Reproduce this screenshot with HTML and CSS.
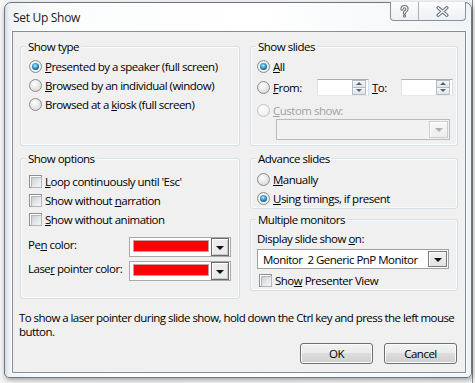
FILE: index.html
```html
<!DOCTYPE html>
<html>
<head>
<meta charset="utf-8">
<title>Set Up Show</title>
<link rel="stylesheet" href="styles.css">
</head>
<body>
<div class="window">
  <div class="titlebar">
    <span class="title">Set Up Show</span>
    <div class="caption-btns">
      <span class="cbtn help">
        <svg width="9" height="13" viewBox="0 0 9 13">
          <path d="M2 4.2 Q2 1.6 4.5 1.6 Q7 1.6 7 4 Q7 5.4 5.6 6.2 Q4.5 6.9 4.5 8.3" fill="none" stroke="#66707b" stroke-width="3.2" stroke-linecap="round"/>
          <path d="M2 4.2 Q2 1.6 4.5 1.6 Q7 1.6 7 4 Q7 5.4 5.6 6.2 Q4.5 6.9 4.5 8.3" fill="none" stroke="#fff" stroke-width="1.1" stroke-linecap="round"/>
          <circle cx="4.5" cy="11" r="1.6" fill="#66707b"/>
          <circle cx="4.5" cy="11" r="0.6" fill="#fff"/>
        </svg>
      </span>
      <span class="cbtn close">
        <svg width="13" height="11" viewBox="0 0 13 11">
          <path d="M2.2 1.8 L10.8 9.2 M10.8 1.8 L2.2 9.2" fill="none" stroke="#66707b" stroke-width="3.4" stroke-linecap="round"/>
          <path d="M2.2 1.8 L10.8 9.2 M10.8 1.8 L2.2 9.2" fill="none" stroke="#fff" stroke-width="1.3" stroke-linecap="round"/>
        </svg>
      </span>
    </div>
  </div>

  <div class="client">
    <div class="groups">
      <div class="group g-type">
        <span class="group-title">Show type</span>
        <div class="opt"><span class="radio on"></span><span><u>P</u>resented by a speaker (full screen)</span></div>
        <div class="opt"><span class="radio"></span><span><u>B</u>rowsed by an individual (window)</span></div>
        <div class="opt"><span class="radio"></span><span>Browsed at a <u>k</u>iosk (full screen)</span></div>
      </div>

      <div class="group g-slides">
        <span class="group-title">Show slides</span>
        <div class="opt"><span class="radio on"></span><span><u>A</u>ll</span></div>
        <div class="opt opt-range">
          <span class="radio"></span>
          <span class="range-label"><u>F</u>rom:</span>
          <span class="spin"><span class="spin-btns"><span class="spin-up"></span><span class="spin-down"></span></span></span>
          <span class="to-label"><u>T</u>o:</span>
          <span class="spin"><span class="spin-btns"><span class="spin-up"></span><span class="spin-down"></span></span></span>
        </div>
        <div class="opt opt-custom disabled"><span class="radio"></span><span><u>C</u>ustom show:</span></div>
        <div class="combo combo-disabled"><span class="combo-text"></span><span class="combo-btn"></span></div>
      </div>

      <div class="group g-options">
        <span class="group-title">Show options</span>
        <div class="opt"><span class="check"></span><span><u>L</u>oop continuously until 'Esc'</span></div>
        <div class="opt"><span class="check"></span><span>Show without <u>n</u>arration</span></div>
        <div class="opt"><span class="check"></span><span><u>S</u>how without animation</span></div>
        <div class="color-row first">
          <span class="color-label">Pe<u>n</u> color:</span>
          <span class="picker"><span class="swatch"></span><span class="picker-btn"></span></span>
        </div>
        <div class="color-row">
          <span class="color-label">Lase<u>r</u> pointer color:</span>
          <span class="picker"><span class="swatch"></span><span class="picker-btn"></span></span>
        </div>
      </div>

      <div class="right-stack">
        <div class="group g-advance">
          <span class="group-title">Advance slides</span>
          <div class="opt"><span class="radio"></span><span><u>M</u>anually</span></div>
          <div class="opt"><span class="radio on"></span><span><u>U</u>sing timings, if present</span></div>
        </div>
        <div class="group g-monitors">
          <span class="group-title">Multiple monitors</span>
          <div class="mon-label">Display slide show <u>o</u>n:</div>
          <div class="combo combo-mon"><span class="combo-text">Monitor&nbsp; 2 Generic PnP Monitor</span><span class="combo-btn"></span></div>
          <div class="opt opt-presenter"><span class="check"></span><span>Sho<u>w</u> Presenter View</span></div>
        </div>
      </div>
    </div>

    <p class="hint">To show a laser pointer during slide show, hold down the Ctrl key and press the left mouse<br>button.</p>

    <div class="actions">
      <button class="btn">OK</button>
      <button class="btn">Cancel</button>
    </div>
  </div>
</div>
</body>
</html>
```

FILE: styles.css
```css
* { box-sizing: border-box; }

html, body {
  margin: 0;
  padding: 0;
}

body {
  width: 475px;
  height: 383px;
  overflow: hidden;
  background:
    linear-gradient(90deg, transparent 472px, #8a8a8a 472px, #8a8a8a 473px, transparent 473px),
    #f4f4f4;
  font-family: "Open Sans", "Noto Sans", sans-serif;
  font-size: 11.5px;
  letter-spacing: -0.5px;
  color: #000;
  padding: 2px 0 0 4px;
}

.window {
  width: 468px;
  height: 376px;
  border: 1px solid #6f7882;
  border-radius: 7px 7px 5px 5px;
  background: linear-gradient(90deg, #d3dbe4 0, #eef2f6 4px, #fbfcfd 40px, #ffffff 55%, #f1f4f7 100%);
  box-shadow: 1px 2px 5px rgba(0, 0, 0, 0.35);
  display: flex;
  flex-direction: column;
}

/* Title bar */
.titlebar {
  height: 28px;
  flex: none;
  display: flex;
  justify-content: space-between;
  align-items: flex-start;
  padding: 0 5px 0 8px;
}

.title {
  line-height: 15px;
  margin-top: 7px;
  font-size: 12px;
  letter-spacing: -0.3px;
  color: #1a1a1a;
}

.caption-btns {
  display: flex;
  height: 19px;
  margin-top: -1px;
  border: 1px solid #88909a;
  border-top: none;
  border-radius: 0 0 4px 4px;
  background: linear-gradient(#fbfcfd, #eef1f4);
  overflow: hidden;
}

.cbtn {
  display: flex;
  align-items: center;
  justify-content: center;
}

.help { width: 27px; padding-top: 1px; }

.close {
  width: 47px;
  border-left: 1px solid #aab1b9;
}

/* Client area */
.client {
  height: 342px;
  margin: 0 5px 0 7px;
  border: 1px solid #838e99;
  box-shadow: 0 0 0 1px #ffffff;
  background: #f0f0f0;
  padding: 14px 7px 0 7px;
  display: flex;
  flex-direction: column;
}

.groups {
  display: grid;
  grid-template-columns: 220px 208px;
  grid-template-rows: 100px 141px;
  column-gap: 10px;
  row-gap: 12px;
}

.group {
  border: 1px solid #d5dfe5;
  border-radius: 3px;
  box-shadow: inset 0 0 0 1px #fbfbfb;
}

.group-title {
  display: block;
  width: fit-content;
  margin: -8px 0 0 5px;
  padding: 0 2px;
  background: #f0f0f0;
  line-height: 15px;
}

.right-stack {
  display: flex;
  flex-direction: column;
  gap: 10px;
}

u {
  text-decoration: underline;
  text-underline-offset: 1px;
}

/* Option rows */
.opt {
  display: flex;
  align-items: center;
  gap: 3px;
  height: 19px;
  white-space: nowrap;
}

.g-type { padding-left: 8px; }
.g-type .group-title { margin-left: -3px; }
.g-type .opt:first-of-type { margin-top: 3px; }

.g-slides { padding-left: 6px; }
.g-slides .group-title { margin-left: -1px; }
.g-slides .opt:first-of-type { margin-top: 3px; }
.opt-range { height: 22px; }
.opt-custom { height: 18px; margin-top: 3px; }

.g-options { padding-left: 8px; }
.g-options .group-title { margin-left: -3px; }
.g-options .opt:first-of-type { margin-top: 6px; }

.g-advance { padding-left: 6px; }
.g-advance .group-title { margin-left: -1px; }
.g-advance .opt:first-of-type { margin-top: 4px; }

.g-monitors { padding-left: 6px; }
.g-monitors .group-title { margin-left: -1px; }

.disabled { color: #a3a3a3; }

/* Radio */
.radio {
  flex: none;
  width: 13px;
  height: 13px;
  border-radius: 50%;
  border: 1px solid #8c8c8c;
  background: radial-gradient(circle at 40% 35%, #ffffff 0, #eeeeee 35%, #cfcfcf 100%);
  display: flex;
  align-items: center;
  justify-content: center;
}

.radio.on {
  background: radial-gradient(circle, #ffffff 0, #f4f4f4 55%, #d4d4d4 100%);
}

.radio.on::after {
  content: "";
  width: 7px;
  height: 7px;
  border-radius: 50%;
  background: radial-gradient(circle at 45% 38%, #c8f2ff 0, #4fb3e2 30%, #17618e 70%, #0d3f63 100%);
}

.disabled .radio {
  border-color: #c4c4c4;
  background: radial-gradient(circle at 40% 35%, #ffffff 0, #f4f4f4 50%, #e2e2e2 100%);
}

/* Checkbox */
.check {
  flex: none;
  width: 13px;
  height: 13px;
  border: 1px solid #8e8f8f;
  background: #ffffff;
  padding: 1px;
}

.check::after {
  content: "";
  display: block;
  width: 9px;
  height: 9px;
  border: 1px solid #b3b7bc;
  background: linear-gradient(135deg, #c9cdd2 0, #e4e6e8 50%, #f7f7f7 100%);
}

/* Spin boxes */
.range-label {
  width: 41px;
  flex: none;
}

.to-label {
  width: 26px;
  flex: none;
  margin-left: 0;
}

.spin {
  flex: none;
  width: 52px;
  height: 17px;
  background: #fff;
  border: 1px solid #abadb3;
  border-left-color: #e2e3ea;
  border-right-color: #dbdfe6;
  border-bottom-color: #e3e9ef;
  display: flex;
  justify-content: flex-end;
  padding: 0 2px 0 0;
}

.spin-btns {
  width: 14px;
  height: 15px;
  display: flex;
  flex-direction: column;
}

.spin-up, .spin-down {
  flex: 1;
  border: 1px solid #b5bcc4;
  background: linear-gradient(#f6f7f9, #dfe4ea);
  display: flex;
  align-items: center;
  justify-content: center;
}

.spin-up { border-bottom: none; }

.spin-up::after {
  content: "";
  border-left: 3px solid transparent;
  border-right: 3px solid transparent;
  border-bottom: 3px solid #5a6470;
}

.spin-down::after {
  content: "";
  border-left: 3px solid transparent;
  border-right: 3px solid transparent;
  border-top: 3px solid #5a6470;
}

/* Combo boxes */
.combo {
  display: flex;
  align-items: center;
  justify-content: space-between;
  border: 1px solid #a0a0a0;
  background: #fff;
}

.combo-disabled {
  width: 174px;
  height: 21px;
  margin: 0 0 0 19px;
  background: #f2f2f2;
  border-color: #b8bcc0;
  padding-right: 1px;
}

.combo-btn {
  width: 19px;
  height: 17px;
  border: 1px solid #7a7a7a;
  box-shadow: inset 1px 1px 0 #fff;
  background: linear-gradient(#f2f2f2, #e2e2e2);
  display: flex;
  align-items: center;
  justify-content: center;
}

.combo-btn::after {
  content: "";
  border-left: 4px solid transparent;
  border-right: 4px solid transparent;
  border-top: 4px solid #111;
  margin-top: 1px;
}

.combo-disabled .combo-btn {
  border-color: #c9cdd1;
  background: linear-gradient(#f7f7f7, #eeeeee);
}

.combo-disabled .combo-btn::after {
  border-top-color: #b0b0b0;
}

.mon-label {
  margin-top: 4px;
  line-height: 15px;
}

.combo-mon {
  width: 192px;
  height: 20px;
  margin-top: 3px;
  padding: 0 1px 0 5px;
}

.combo-mon .combo-btn {
  height: 16px;
}

.combo-text {
  white-space: nowrap;
}

.opt-presenter {
  margin-top: 2px;
  padding-left: 2px;
}

/* Color pickers */
.color-row {
  display: flex;
  align-items: center;
  height: 20px;
  margin-top: 4px;
}

.color-row.first { margin-top: 8px; }

.color-label {
  width: 101px;
  flex: none;
  margin-left: -1px;
  margin-top: -5px;
  white-space: nowrap;
}

.picker {
  width: 102px;
  height: 20px;
  border: 1px solid #a9a9a9;
  background: #fff;
  display: flex;
  align-items: flex-start;
  padding: 0 1px 0 3px;
}

.swatch {
  width: 76px;
  height: 12px;
  margin-top: 2px;
  background: #ff0000;
  border: 1px solid #c8a0a0;
}

.picker-btn {
  margin-left: 2px;
  width: 18px;
  height: 18px;
  border: 1px solid #6a6a6a;
  box-shadow: inset 1px 1px 0 #fff, inset -1px -1px 0 #c8c8c8;
  background: #ececec;
  display: flex;
  align-items: center;
  justify-content: center;
}

.picker-btn::after {
  content: "";
  border-left: 4px solid transparent;
  border-right: 4px solid transparent;
  border-top: 4px solid #111;
  margin-top: 2px;
}

/* Footer */
.hint {
  margin: 12px 0 0 -1px;
  line-height: 14px;
  white-space: nowrap;
  letter-spacing: -0.55px;
}

.actions {
  display: flex;
  justify-content: flex-end;
  gap: 11px;
  margin-top: 4px;
  padding-right: 1px;
}

.btn {
  width: 73px;
  height: 21px;
  border: 1px solid #707070;
  border-radius: 3px;
  box-shadow: inset 0 0 0 1px #fbfbfb;
  background: linear-gradient(#f2f2f2 0, #ebebeb 50%, #dddddd 50%, #cfcfcf 100%);
  font-family: inherit;
  font-size: inherit;
  letter-spacing: inherit;
  color: #000;
  padding: 0;
}
```
